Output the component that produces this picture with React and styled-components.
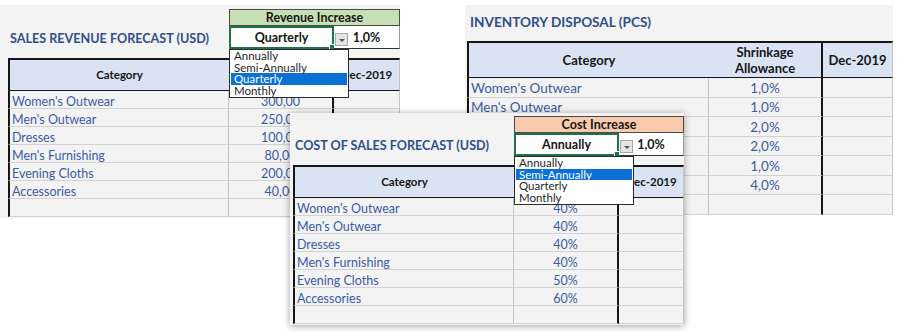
import React from 'react';
import styled, { createGlobalStyle, css } from 'styled-components';

const Global = createGlobalStyle`
  html, body { margin: 0; padding: 0; background: #ffffff; }
  body { font-family: Lato, "Open Sans", sans-serif; }
`;

const INK = '#161616';
const BLUE_TEXT = '#3a5ba6';
const TITLE = '#2f4e8c';
const GRID = '#d2d2d2';
const VGRID = '#c4c4c4';

const Canvas = styled.div`
  position: relative;
  width: 906px;
  height: 332px;
  overflow: hidden;
  background: #ffffff;
`;

const Window = styled.div`
  position: absolute;
  left: ${(p) => p.$x}px;
  top: ${(p) => p.$y}px;
  background: #f3f3f3;
  ${(p) =>
    p.$raised &&
    css`
      z-index: 2;
      box-shadow: 0 1px 7px rgba(0, 0, 0, 0.38);
    `}
`;

const ForecastGrid = styled.div`
  position: relative;
  display: grid;
  grid-template-columns: 221px 105px ${(p) => p.$lastCol}px;
  grid-template-rows: 17px 23px 9px 33px repeat(7, 18px);
  padding: ${(p) => p.$padTop}px 0 1px ${(p) => p.$padLeft}px;
`;

const ControlHead = styled.div`
  grid-column: 2 / span 2;
  grid-row: 1;
  background: ${(p) => p.$tone};
  border: 1px solid #4a4a4a;
  display: flex;
  align-items: center;
  justify-content: center;
  font-weight: 700;
  font-size: 12.5px;
  color: ${INK};
`;

const SheetTitle = styled.div`
  grid-column: 1;
  grid-row: 2;
  display: flex;
  align-items: center;
  padding-left: 2px;
  padding-top: 2px;
  font-weight: 700;
  font-size: 12.6px;
  color: ${TITLE};
  white-space: nowrap;
`;

const SelectCell = styled.div`
  grid-column: 2;
  grid-row: 2;
  position: relative;
  background: #ffffff;
  border: 2px solid #1f7246;
  display: flex;
  align-items: center;
  justify-content: center;
  font-weight: 700;
  font-size: 12.5px;
  color: ${INK};
  &::after {
    content: '';
    position: absolute;
    right: -4px;
    bottom: -4px;
    width: 5px;
    height: 5px;
    background: #1f7246;
    border: 1px solid #ffffff;
  }
`;

const RateCell = styled.div`
  grid-column: 3;
  grid-row: 2;
  position: relative;
  background: #ffffff;
  border-bottom: 1px solid #333;
  border-right: 1px solid #9a9a9a;
  display: flex;
  align-items: center;
  justify-content: center;
  font-weight: 700;
  font-size: 12.5px;
  color: ${INK};
`;

const ArrowButton = styled.span`
  position: absolute;
  left: 1px;
  top: 7px;
  width: 13px;
  height: 13px;
  box-sizing: border-box;
  background: #e4e4e4;
  border: 1px solid #a8a8a8;
  display: flex;
  align-items: center;
  justify-content: center;
  &::before {
    content: '';
    margin-top: 2px;
    border-left: 3px solid transparent;
    border-right: 3px solid transparent;
    border-top: 3px solid #555;
  }
`;

const HeadCell = styled.div`
  grid-row: ${(p) => p.$row};
  grid-column: ${(p) => p.$col};
  background: #dae3f3;
  border-top: 2px solid ${INK};
  border-bottom: 1px solid ${INK};
  display: flex;
  align-items: center;
  justify-content: center;
  text-align: center;
  font-weight: 700;
  font-size: ${(p) => p.$size || 11.5}px;
  line-height: 1.25;
  color: ${INK};
  ${(p) => p.$first && css`border-left: 2px solid ${INK};`}
  ${(p) => p.$split && css`border-right: 2px solid ${INK};`}
  ${(p) => p.$last && css`border-right: 1px solid ${VGRID};`}
`;

const DataCell = styled.div`
  grid-row: ${(p) => p.$row};
  grid-column: ${(p) => p.$col};
  border-bottom: 1px solid ${GRID};
  display: flex;
  align-items: center;
  justify-content: ${(p) => (p.$left ? 'flex-start' : 'center')};
  padding-left: ${(p) => (p.$left ? 2 : 0)}px;
  padding-top: ${(p) => (p.$lower ? 3 : 1)}px;
  font-size: ${(p) => p.$size || 12.5}px;
  color: ${BLUE_TEXT};
  white-space: nowrap;
  overflow: hidden;
  ${(p) => p.$left && css`border-left: 2px solid ${INK}; border-right: 1px solid ${VGRID};`}
  ${(p) => p.$split && css`border-right: 2px solid ${INK};`}
  ${(p) => p.$last && css`border-right: 1px solid ${VGRID};`}
`;

const ListBox = styled.ul`
  position: absolute;
  left: ${(p) => p.$x}px;
  top: ${(p) => p.$y}px;
  width: 120px;
  margin: 0;
  padding: 0 0 1px;
  list-style: none;
  background: #ffffff;
  border: 1px solid #2b2b2b;
  box-sizing: border-box;
  z-index: 3;
`;

const ListItem = styled.li`
  height: 11.5px;
  line-height: 11.5px;
  padding-left: 3px;
  margin: 0 1px;
  font-size: 11.5px;
  color: ${(p) => (p.$active ? '#ffffff' : '#1f1f1f')};
  background: ${(p) => (p.$active ? '#0a70d3' : 'transparent')};
`;

const InventoryGrid = styled.div`
  display: grid;
  grid-template-columns: 242px 114px 70px;
  grid-template-rows: 36px 37px repeat(7, 19.5px);
  padding: 0 0 0 2px;
`;

const InventoryTitle = styled.div`
  grid-column: 1 / span 3;
  grid-row: 1;
  display: flex;
  align-items: center;
  padding-left: 3px;
  padding-bottom: 3px;
  font-weight: 700;
  font-size: 13.6px;
  color: ${TITLE};
`;

const CATEGORIES = [
  "Women's Outwear",
  "Men's Outwear",
  'Dresses',
  "Men's Furnishing",
  'Evening Cloths',
  'Accessories',
  '',
];

const OPTIONS = ['Annually', 'Semi-Annually', 'Quarterly', 'Monthly'];

function ForecastSheet({ x, y, padTop, raised, padLeft, lastCol, tone, head, title, choice, hover, values }) {
  return (
    <Window $x={x} $y={y} $raised={raised}>
      <ForecastGrid $padLeft={padLeft} $padTop={padTop} $lastCol={lastCol}>
        <ControlHead $tone={tone}>{head}</ControlHead>
        <SheetTitle>{title}</SheetTitle>
        <SelectCell>{choice}</SelectCell>
        <RateCell>
          <ArrowButton />
          1,0%
        </RateCell>
        <HeadCell $row={4} $col={1} $first>Category</HeadCell>
        <HeadCell $row={4} $col={2} $split />
        <HeadCell $row={4} $col={3} $last>Dec-2019</HeadCell>
        {CATEGORIES.map((name, i) => (
          <React.Fragment key={i}>
            <DataCell $row={5 + i} $col={1} $left $lower>{name}</DataCell>
            <DataCell $row={5 + i} $col={2} $split $lower>{values[i] || ''}</DataCell>
            <DataCell $row={5 + i} $col={3} $last />
          </React.Fragment>
        ))}
        <ListBox $x={padLeft + 221} $y={padTop + 40}>
          {OPTIONS.map((o) => (
            <ListItem key={o} $active={o === hover}>{o}</ListItem>
          ))}
        </ListBox>
      </ForecastGrid>
    </Window>
  );
}

function InventorySheet() {
  const rates = ['1,0%', '1,0%', '2,0%', '2,0%', '1,0%', '4,0%', ''];
  return (
    <Window $x={465} $y={5}>
      <InventoryGrid>
        <InventoryTitle>INVENTORY DISPOSAL (PCS)</InventoryTitle>
        <HeadCell $row={2} $col={1} $first $size={13}>Category</HeadCell>
        <HeadCell $row={2} $col={2} $split $size={13}>
          Shrinkage
          <br />
          Allowance
        </HeadCell>
        <HeadCell $row={2} $col={3} $last $size={13}>Dec-2019</HeadCell>
        {CATEGORIES.map((name, i) => (
          <React.Fragment key={i}>
            <DataCell $row={3 + i} $col={1} $left $size={13.5}>{name}</DataCell>
            <DataCell $row={3 + i} $col={2} $split $size={13.5}>{rates[i]}</DataCell>
            <DataCell $row={3 + i} $col={3} $last />
          </React.Fragment>
        ))}
      </InventoryGrid>
    </Window>
  );
}

export default function App() {
  return (
    <>
      <Global />
      <Canvas>
        <ForecastSheet
          x={0}
          y={5}
          padTop={4}
          padLeft={8}
          lastCol={66}
          tone="#c6e0b4"
          head="Revenue Increase"
          title="SALES REVENUE FORECAST (USD)"
          choice="Quarterly"
          hover="Quarterly"
          values={['300,00', '250,00', '100,00', '80,00', '200,00', '40,00']}
        />
        <InventorySheet />
        <ForecastSheet
          x={290}
          y={113}
          padTop={3}
          raised
          padLeft={3}
          lastCol={65}
          tone="#f8cbad"
          head="Cost Increase"
          title="COST OF SALES FORECAST (USD)"
          choice="Annually"
          hover="Semi-Annually"
          values={['40%', '40%', '40%', '40%', '50%', '60%']}
        />
      </Canvas>
    </>
  );
}
